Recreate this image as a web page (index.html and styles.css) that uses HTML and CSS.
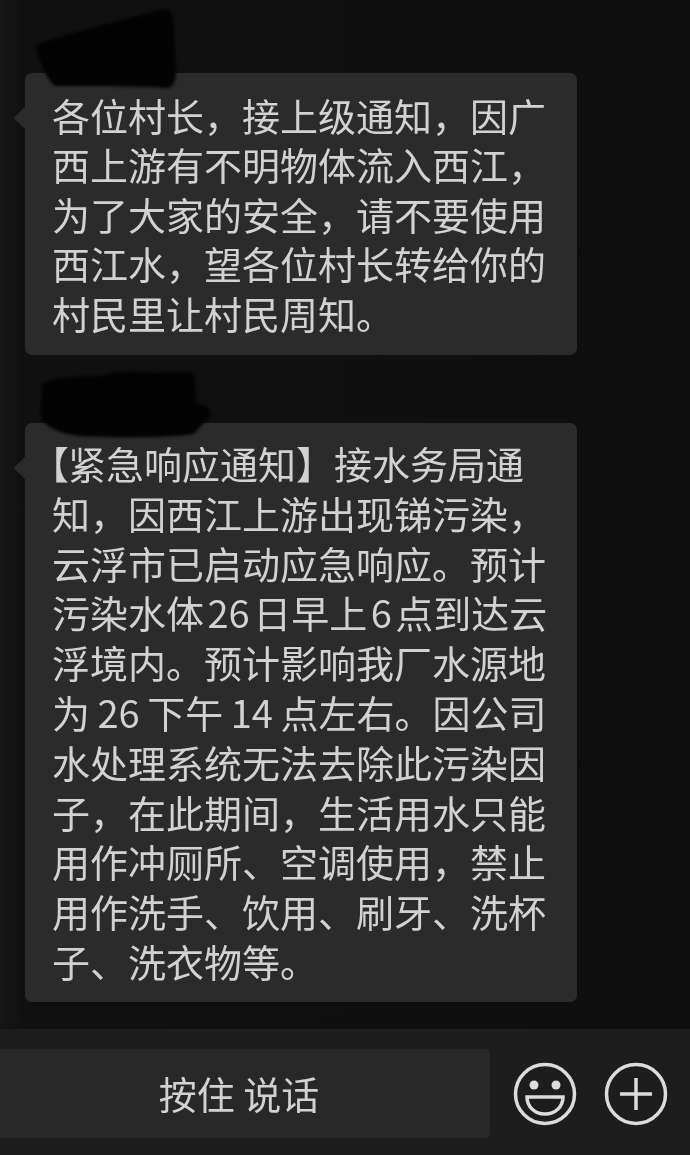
FILE: index.html
```html
<!DOCTYPE html>
<html lang="zh-CN">
<head>
<meta charset="utf-8">
<title>聊天</title>
<link rel="stylesheet" href="styles.css">
</head>
<body>
<main class="chat">
  <article class="message first">
    <svg class="blot blot-one" viewBox="0 0 150 80" aria-hidden="true"><path d="M2 38C30 26 90 12 132 1C140 1 141 14 141 26C142 36 141 44 142 55C143 66 144 76 136 80C100 78 50 78 22 78C12 70 6 50 2 38Z"/></svg>
    <div class="bubble bubble-one">各位村长，接上级通知，因广<br>西上游有不明物体流入西江，<br>为了大家的安全，请不要使用<br>西江水，望各位村长转给你的<br>村民里让村民周知。</div>
  </article>
  <article class="message">
    <svg class="blot blot-two" viewBox="0 0 172 68" aria-hidden="true"><path d="M2 16C4 8 40 6 60 6C80 0 100 2 112 3C130 2 150 1 154 4C156 14 155 26 156 34C166 34 172 40 170 46C166 52 160 56 154 64C130 68 70 68 40 66C22 64 8 58 2 50C0 40 2 26 2 16Z"/></svg>
    <div class="bubble bubble-two"><span class="open-bracket">【</span>紧急响应通知】接水务局通<br>知，因西江上游出现锑污染，<br>云浮市已启动应急响应。预计<br><span class="tight">污染水体 26 日早上 6 点到达云</span><br>浮境内。预计影响我厂水源地<br><span class="snug">为 26 下午 14 点左右。因公司</span><br>水处理系统无法去除此污染因<br>子，在此期间，生活用水只能<br>用作冲厕所、空调使用，禁止<br>用作洗手、饮用、刷牙、洗杯<br>子、洗衣物等。</div>
  </article>
</main>
<footer class="toolbar">
  <div class="talk">按住 说话</div>
  <svg class="icon" viewBox="0 0 64 64" aria-label="表情"><circle cx="32" cy="32" r="29.5"/><circle class="eye" cx="21" cy="23" r="4.5"/><circle class="eye" cx="43" cy="23" r="4.5"/><path d="M14 35H50C50 45 42 52 32 52C22 52 14 45 14 35Z"/></svg>
  <svg class="icon" viewBox="0 0 64 64" aria-label="更多"><circle cx="32" cy="32" r="29.5"/><path d="M16 32H48M32 16V48"/></svg>
</footer>
</body>
</html>
```

FILE: styles.css
```css
* {
  box-sizing: border-box;
}

html,
body {
  margin: 0;
  height: 100%;
}

body {
  width: 690px;
  height: 1155px;
  overflow: hidden;
  display: flex;
  flex-direction: column;
  background: #0e0e0e;
  font-family: "Noto Sans CJK SC", "Noto Sans", sans-serif;
}

.chat {
  flex: 0 0 1029px;
  padding: 73px 0 0 25px;
  display: flex;
  flex-direction: column;
  gap: 68px;
  background: linear-gradient(90deg, #161616 0, #101010 22px, #0e0e0e 100%);
}

.message {
  position: relative;
  width: 552px;
}

.bubble {
  position: relative;
  padding-left: 27px;
  border-radius: 7px;
  background: #2b2b2b;
  color: #d2d2d2;
  font-size: 38px;
  white-space: nowrap;
  font-weight: 400;
  filter: blur(0.5px);
}

.bubble::before {
  content: "";
  position: absolute;
  left: -8px;
  width: 16px;
  height: 16px;
  background: #2b2b2b;
  transform: rotate(45deg);
}

.bubble-one {
  height: 282px;
  padding-top: 17px;
  line-height: 49.4px;
}

.bubble-one::before {
  top: 37px;
}

.bubble-two {
  height: 579px;
  padding-top: 15px;
  line-height: 49.8px;
}

.bubble-two::before {
  top: 37px;
}

.open-bracket {
  margin-left: -3px;
  font-feature-settings: "palt";
}

.tight {
  word-spacing: -5px;
}

.snug {
  word-spacing: -1px;
}

.blot {
  position: absolute;
  z-index: 1;
  fill: #030303;
  filter: blur(1.5px);
}

.blot-one {
  left: 8px;
  top: -65px;
  width: 150px;
  height: 80px;
}

.blot-two {
  left: 15px;
  top: -53px;
  width: 172px;
  height: 68px;
}

.toolbar {
  flex: 1;
  padding-top: 20px;
  padding-bottom: 17px;
  display: flex;
  align-items: center;
  gap: 27px;
  background: #1d1d1d;
}

.talk {
  width: 490px;
  height: 89px;
  margin-right: -4px;
  padding-right: 12px;
  padding-bottom: 2px;
  border-radius: 0 5px 5px 0;
  background: #282828;
  color: #d2d2d2;
  font-size: 38px;
  display: flex;
  align-items: center;
  justify-content: center;
  filter: blur(0.5px);
}

.icon {
  width: 64px;
  height: 64px;
  flex: none;
  fill: none;
  stroke: #dcdcdc;
  stroke-width: 3.5;
  filter: blur(0.4px);
}

.icon .eye {
  fill: #dcdcdc;
  stroke: none;
}
```
